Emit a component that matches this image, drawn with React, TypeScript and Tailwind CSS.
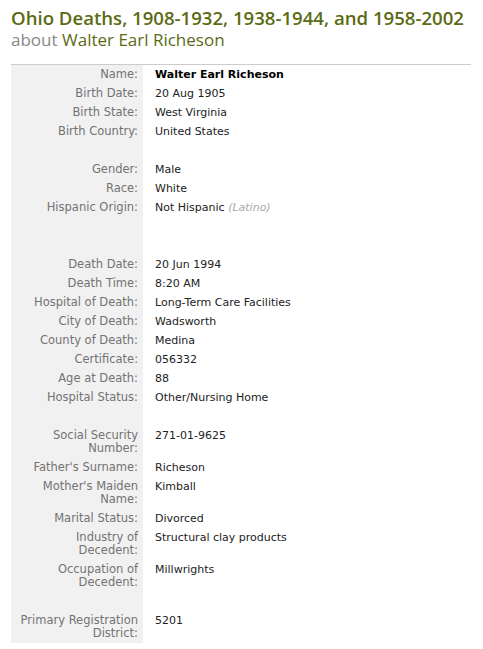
import React from "react";

type Row = { label?: string; value?: React.ReactNode; bold?: boolean };

// null = blank spacer row
const ROWS: (Row | null)[] = [
  { label: "Name:", value: "Walter Earl Richeson", bold: true },
  { label: "Birth Date:", value: "20 Aug 1905" },
  { label: "Birth State:", value: "West Virginia" },
  { label: "Birth Country:", value: "United States" },
  null,
  { label: "Gender:", value: "Male" },
  { label: "Race:", value: "White" },
  {
    label: "Hispanic Origin:",
    value: (
      <>
        Not Hispanic <span className="italic text-[#aaaaaa]">(Latino)</span>
      </>
    ),
  },
  null,
  null,
  { label: "Death Date:", value: "20 Jun 1994" },
  { label: "Death Time:", value: "8:20 AM" },
  { label: "Hospital of Death:", value: "Long-Term Care Facilities" },
  { label: "City of Death:", value: "Wadsworth" },
  { label: "County of Death:", value: "Medina" },
  { label: "Certificate:", value: "056332" },
  { label: "Age at Death:", value: "88" },
  { label: "Hospital Status:", value: "Other/Nursing Home" },
  null,
  { label: "Social Security Number:", value: "271-01-9625" },
  { label: "Father's Surname:", value: "Richeson" },
  { label: "Mother's Maiden Name:", value: "Kimball" },
  { label: "Marital Status:", value: "Divorced" },
  { label: "Industry of Decedent:", value: "Structural clay products" },
  { label: "Occupation of Decedent:", value: "Millwrights" },
  null,
  { label: "Primary Registration District:", value: "5201" },
];

export default function App() {
  return (
    <div className="w-[483px] h-[649px] bg-white overflow-hidden font-['DejaVu_Sans',Verdana,sans-serif]">
      <div className="pl-[11px] pt-[6px] font-['Open_Sans',sans-serif]">
        <h1 className="text-[18.6px] leading-[24px] font-semibold text-[#5b6b14] whitespace-nowrap">
          Ohio Deaths, 1908-1932, 1938-1944, and 1958-2002
        </h1>
        <p className="text-[17px] leading-[20px] text-[#888888]">
          about <span className="text-[#5b6b14]">Walter Earl Richeson</span>
        </p>
      </div>

      <div className="mt-[14px] ml-[11px] mr-[12px] border-t border-[#cccccc]">
        {ROWS.map((row, i) =>
          row ? (
            <div key={i} className="flex leading-[13px]">
              <div className="w-[132px] shrink-0 bg-[#f1f1f1] text-right text-[11.5px] text-[#737373] pl-[6px] pr-[5px] py-[3px]">
                {row.label}
              </div>
              <div
                className={
                  "pl-[12px] py-[3px] text-[11px] text-[#222222] " +
                  (row.bold ? "font-bold text-black" : "")
                }
              >
                {row.value}
              </div>
            </div>
          ) : (
            <div key={i} className="flex h-[19px]">
              <div className="w-[132px] bg-[#f1f1f1]" />
            </div>
          )
        )}
      </div>
    </div>
  );
}
